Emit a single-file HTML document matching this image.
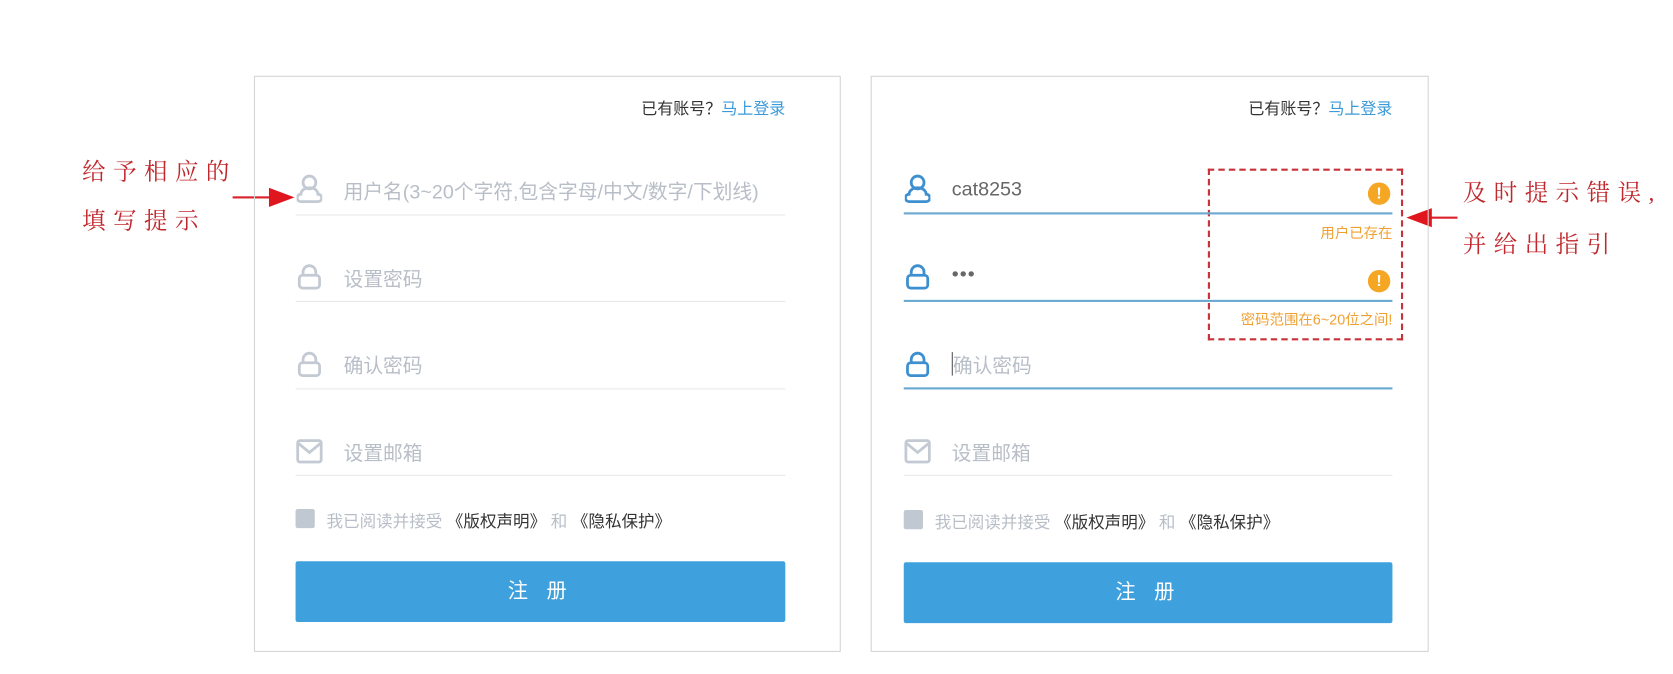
<!DOCTYPE html>
<html><head><meta charset="utf-8"><style>
*{margin:0;padding:0;box-sizing:border-box}
body{width:1673px;height:674px;background:#fff;position:relative;overflow:hidden;font-family:"Liberation Sans","Noto Sans CJK SC",sans-serif}
#w{position:absolute;left:0;top:0;width:1568px;height:632px;transform:scale(1.067);transform-origin:0 0}
.a{position:absolute}
.panel{position:absolute;border:1px solid #d4d4d4;top:71px;height:540px}
.hdr{font-size:15px;color:#333;white-space:nowrap}
.hdr span{color:#3d9ad8}
.line{position:absolute;height:1px;background:#e8e8e8}
.line.b{background:#6aaad0;height:2px}
.ph{font-size:18.5px;color:#b8bec7;white-space:nowrap}
.val{font-size:18.5px;color:#666;white-space:nowrap}
.chk{font-size:15.5px;color:#b8bec7;white-space:nowrap}
.chk b{font-weight:normal;color:#333}
.cb{position:absolute;width:18px;height:18px;background:#c0c8d2;border-radius:2px}
.btn{position:absolute;height:57px;background:#3ea0dc;border-radius:2px;color:#fff;font-size:19px;text-align:center;line-height:57px;letter-spacing:6px}
.ann{font-family:"Liberation Serif","Noto Serif CJK SC",serif;color:#c0282d;font-size:22px;letter-spacing:7px;white-space:nowrap}
.warn{position:absolute;width:21px;height:21px;border-radius:50%;background:#f5a623;color:#fff;font-weight:bold;font-size:15px;text-align:center;line-height:21px}
.err{position:absolute;font-size:13.5px;color:#f0a030;white-space:nowrap;text-align:right}
</style></head><body><div id="w">

<div class="a ann" style="left:77px;top:144px">给予相应的</div>
<div class="a ann" style="left:77px;top:190px">填写提示</div>
<div class="a" style="left:218px;top:184px;width:40px;height:2px;background:#d9222a"></div>
<svg class="a" style="left:252px;top:176px" width="24" height="18"><polygon points="0,0 24,9 0,18" fill="#e0161e"/></svg>

<div class="a ann" style="left:1371px;top:164px">及时提示错误,</div>
<div class="a ann" style="left:1371px;top:212px">并给出指引</div>
<div class="a" style="left:1340px;top:203px;width:26px;height:2px;background:#d9222a"></div>
<svg class="a" style="left:1318px;top:195px" width="24" height="18"><polygon points="24,0 0,9 24,18" fill="#e0161e"/></svg>
<div class="a" style="left:1132px;top:158px;width:183px;height:161px;border:2px dashed #c8323a"></div>

<div class="panel" style="left:238px;width:550px"></div>
<div class="a hdr" style="right:832px;top:91px">已有账号？<span>马上登录</span></div>

<svg class="a" style="left:278px;top:163px" width="24" height="28" fill="none" stroke="#c3cad3" stroke-width="2.6"><circle cx="12" cy="8" r="6"/><path d="M4 26h16a3 3 0 0 0 0-7a8 6 0 0 0-16 0a3 3 0 0 0 0 7z"/></svg>
<div class="a ph" style="left:322px;top:166px">用户名(3~20个字符,包含字母/中文/数字/下划线)</div>
<div class="line" style="left:277px;top:201px;width:459px"></div>

<svg class="a" style="left:278px;top:246px" width="24" height="26" fill="none" stroke="#c3cad3" stroke-width="2.6"><path d="M6 12V9a6 6 0 0 1 12 0v3"/><rect x="2.5" y="12" width="19" height="12" rx="3"/></svg>
<div class="a ph" style="left:322px;top:248px">设置密码</div>
<div class="line" style="left:277px;top:282px;width:459px"></div>

<svg class="a" style="left:278px;top:328px" width="24" height="26" fill="none" stroke="#c3cad3" stroke-width="2.6"><path d="M6 12V9a6 6 0 0 1 12 0v3"/><rect x="2.5" y="12" width="19" height="12" rx="3"/></svg>
<div class="a ph" style="left:322px;top:329px">确认密码</div>
<div class="line" style="left:277px;top:364px;width:459px"></div>

<svg class="a" style="left:277px;top:411px" width="26" height="24" fill="none" stroke="#c3cad3" stroke-width="2.6"><rect x="2" y="2" width="22" height="20" rx="2"/><path d="M2 4l11 9 11-9"/></svg>
<div class="a ph" style="left:322px;top:411px">设置邮箱</div>
<div class="line" style="left:277px;top:445px;width:459px"></div>

<div class="cb" style="left:277px;top:477px"></div>
<div class="a chk" style="left:306px;top:477px">我已阅读并接受 <b>《版权声明》</b> 和 <b>《隐私保护》</b></div>
<div class="btn" style="left:277px;top:526px;width:459px">注 册</div>

<div class="panel" style="left:816px;width:523px"></div>
<div class="a hdr" style="right:263px;top:91px">已有账号？<span>马上登录</span></div>

<svg class="a" style="left:848px;top:163px" width="24" height="28" fill="none" stroke="#3d8fd0" stroke-width="2.6"><circle cx="12" cy="8" r="6"/><path d="M4 26h16a3 3 0 0 0 0-7a8 6 0 0 0-16 0a3 3 0 0 0 0 7z"/></svg>
<div class="a val" style="left:892px;top:166px">cat8253</div>
<div class="warn" style="left:1282px;top:171px">!</div>
<div class="line b" style="left:847px;top:199px;width:458px"></div>
<div class="err" style="right:263px;top:207px">用户已存在</div>

<svg class="a" style="left:848px;top:246px" width="24" height="26" fill="none" stroke="#3d8fd0" stroke-width="2.6"><path d="M6 12V9a6 6 0 0 1 12 0v3"/><rect x="2.5" y="12" width="19" height="12" rx="3"/></svg>
<div class="a val" style="left:892px;top:246px;letter-spacing:1px">•••</div>
<div class="warn" style="left:1282px;top:253px">!</div>
<div class="line b" style="left:847px;top:281px;width:458px"></div>
<div class="err" style="right:263px;top:288px">密码范围在6~20位之间!</div>

<svg class="a" style="left:848px;top:328px" width="24" height="26" fill="none" stroke="#3d8fd0" stroke-width="2.6"><path d="M6 12V9a6 6 0 0 1 12 0v3"/><rect x="2.5" y="12" width="19" height="12" rx="3"/></svg>
<div class="a" style="left:892px;top:330px;width:1px;height:22px;background:#555"></div>
<div class="a ph" style="left:893px;top:329px">确认密码</div>
<div class="line b" style="left:847px;top:363px;width:458px"></div>

<svg class="a" style="left:847px;top:411px" width="26" height="24" fill="none" stroke="#c3cad3" stroke-width="2.6"><rect x="2" y="2" width="22" height="20" rx="2"/><path d="M2 4l11 9 11-9"/></svg>
<div class="a ph" style="left:892px;top:411px">设置邮箱</div>
<div class="line" style="left:847px;top:445px;width:458px"></div>

<div class="cb" style="left:847px;top:478px"></div>
<div class="a chk" style="left:876px;top:478px">我已阅读并接受 <b>《版权声明》</b> 和 <b>《隐私保护》</b></div>
<div class="btn" style="left:847px;top:527px;width:458px">注 册</div>

</div></body></html>
